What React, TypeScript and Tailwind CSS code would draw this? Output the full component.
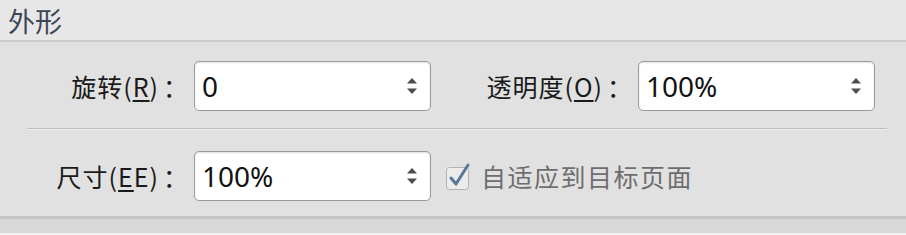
import React from 'react';

const cjk = { fontFamily: '"Noto Sans CJK SC", "Noto Sans", sans-serif' };
const num = { fontFamily: '"Noto Sans", "Noto Sans CJK SC", sans-serif' };

const Spinner = () => (
  <svg width="12" height="22" viewBox="0 0 12 22" className="shrink-0">
    <path d="M6 3 L11 8.5 L1 8.5 Z" fill="#4d4d4d" />
    <path d="M1 13.5 L11 13.5 L6 19 Z" fill="#4d4d4d" />
  </svg>
);

const NumberBox = ({ value }: { value: string }) => (
  <div className="flex h-[50px] w-[237px] items-center justify-between rounded-[5px] border border-[#9a9a9a] bg-white pl-[7px] pr-[12px] shadow-[inset_0_1px_2px_rgba(0,0,0,0.12)]">
    <span className="text-[28px] leading-none text-[#111]" style={num}>
      {value}
    </span>
    <Spinner />
  </div>
);

// full-width colon hangs a little past the label box, as in the original dialog
const Colon = () => <span className="ml-[4px] mr-[-8px] tracking-normal">：</span>;

const App = () => {
  return (
    <div className="h-[235px] w-[906px] overflow-hidden bg-[#e1e1e1]">
      {/* Header */}
      <div className="flex h-[40px] items-center bg-[#e7e7e7] pl-[8px]">
        <span className="text-[27px] leading-none text-[#3b4656]" style={cjk}>
          外形
        </span>
      </div>
      <div className="h-[2px] bg-[#cbcbcb]" />

      {/* Row 1 */}
      <div className="mt-[19px] flex h-[50px] items-center">
        <div className="w-[180px] shrink-0 text-right text-[25px] leading-none tracking-[1px] text-[#1a1a1a]" style={cjk}>
          旋转(<span className="underline underline-offset-[3px]">R</span>)<Colon />
        </div>
        <div className="ml-[14px]">
          <NumberBox value="0" />
        </div>
        <div className="w-[193px] shrink-0 text-right text-[25px] leading-none tracking-[1px] text-[#1a1a1a]" style={cjk}>
          透明度(<span className="underline underline-offset-[3px]">O</span>)<Colon />
        </div>
        <div className="ml-[14px]">
          <NumberBox value="100%" />
        </div>
      </div>

      {/* Separator */}
      <div className="mx-[27px] mt-[17px] w-[860px]">
        <div className="h-[1px] bg-[#bcbcbc]" />
        <div className="h-[1px] bg-[#efefef]" />
      </div>

      {/* Row 2 */}
      <div className="mt-[21px] flex h-[50px] items-center">
        <div className="w-[180px] shrink-0 text-right text-[25px] leading-none tracking-[1px] text-[#1a1a1a]" style={cjk}>
          尺寸(<span className="underline underline-offset-[3px]">E</span>E)<Colon />
        </div>
        <div className="ml-[14px]">
          <NumberBox value="100%" />
        </div>
        <div className="ml-[13px] flex items-center">
          <svg width="28" height="28" viewBox="0 0 28 28" className="shrink-0">
            <rect x="2.5" y="5.5" width="22" height="22" rx="3" fill="#ececec" stroke="#b4b4b4" />
            <path d="M7 16 L12 22 L24 3" fill="none" stroke="#5a7899" strokeWidth="3" strokeLinecap="round" strokeLinejoin="round" />
          </svg>
          <span className="ml-[9px] text-[25px] leading-none tracking-[1.5px] text-[#6e6e6e]" style={cjk}>
            自适应到目标页面
          </span>
        </div>
      </div>

      {/* Bottom */}
      <div className="mt-[15px] h-[3px] bg-[#c4c4c4]" />
      <div className="h-[14px] bg-[#d9d9d9]" />
      <div className="h-[2px] bg-[#f2f2f2]" />
    </div>
  );
};

export default App;
